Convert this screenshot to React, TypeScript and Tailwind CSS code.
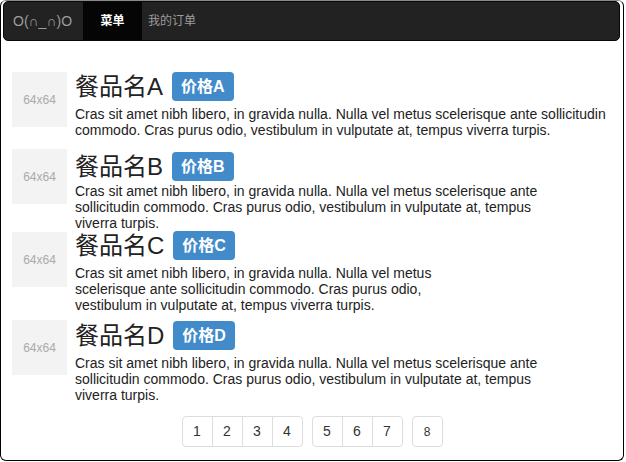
import React from "react";

const FONT = '"Liberation Sans", Arial, "Noto Sans CJK SC", sans-serif';
const LOREM =
  "Cras sit amet nibh libero, in gravida nulla. Nulla vel metus scelerisque ante sollicitudin commodo. Cras purus odio, vestibulum in vulputate at, tempus viverra turpis.";

type Item = { name: string; price: string; mt: string; imgOffset: string; width: string; pmt: string };

const items: Item[] = [
  { name: "餐品名A", price: "价格A", mt: "mt-[31px]", imgOffset: "mt-0", width: "w-[540px]", pmt: "mt-[5px]" },
  { name: "餐品名B", price: "价格B", mt: "mt-[14px]", imgOffset: "-mt-[3px]", width: "w-[470px]", pmt: "mt-[2px]" },
  { name: "餐品名C", price: "价格C", mt: "mt-0", imgOffset: "mt-[1px]", width: "w-[360px]", pmt: "mt-[5px]" },
  { name: "餐品名D", price: "价格D", mt: "mt-[8px]", imgOffset: "-mt-[1px]", width: "w-[470px]", pmt: "mt-[5px]" },
];

function MediaItem({ it }: { it: Item }) {
  return (
    <div className={`flex pl-[11px] gap-[8px] ${it.mt}`}>
      <div
        className={`w-[55px] h-[55px] shrink-0 bg-[#f3f3f3] flex items-center justify-center text-[12px] text-[#aaaaaa] ${it.imgOffset}`}
      >
        64x64
      </div>
      <div className={`${it.width} flex flex-col`}>
        <div className="h-[29px] flex items-center gap-[9px]">
          <span className="text-[24px] leading-none text-[#222]">{it.name}</span>
          <span className="h-[29px] px-[9px] rounded-[4px] bg-[#428bca] text-white font-bold text-[16px] flex items-center">
            {it.price}
          </span>
        </div>
        <p className={`${it.pmt} text-[14px] leading-[16px] text-[#222]`}>{LOREM}</p>
      </div>
    </div>
  );
}

function PageBtn({ label, first, small }: { label: string; first?: boolean; small?: boolean }) {
  return (
    <div
      className={`w-[31px] h-[31px] flex items-center justify-center border border-[#dddddd] bg-white text-[#333] ${
        small ? "text-[12px]" : "text-[14px]"
      } ${first ? "" : "-ml-px"}`}
    >
      {label}
    </div>
  );
}

export default function App() {
  return (
    <div className="w-[626px] h-[462px] bg-white" style={{ fontFamily: FONT }}>
      <div className="w-[624px] h-[461px] border border-black border-t-[#8a8a8a] rounded-[6px] overflow-hidden flex flex-col">
        <div className="ml-[2px] mr-[3px] h-[40px] bg-[#222222] border border-[#080808] rounded-[5px] flex items-stretch">
          <div className="w-[79px] pl-[9px] flex items-center text-[14px] text-[#9d9d9d]">O(∩_∩)O</div>
          <div className="w-[59px] bg-[#050505] flex items-center justify-center text-[12px] font-bold text-white">
            菜单
          </div>
          <div className="pl-[6px] flex items-center text-[12px] text-[#9d9d9d]">我的订单</div>
        </div>
        {items.map((it) => (
          <MediaItem key={it.name} it={it} />
        ))}
        <div className="mt-[13px] flex justify-center gap-[9px]">
          <div className="flex [&>*:first-child]:rounded-l-[4px] [&>*:last-child]:rounded-r-[4px]">
            <PageBtn label="1" first />
            <PageBtn label="2" />
            <PageBtn label="3" />
            <PageBtn label="4" />
          </div>
          <div className="flex [&>*:first-child]:rounded-l-[4px] [&>*:last-child]:rounded-r-[4px]">
            <PageBtn label="5" first />
            <PageBtn label="6" />
            <PageBtn label="7" />
          </div>
          <div className="flex [&>*]:rounded-[4px]">
            <PageBtn label="8" first small />
          </div>
        </div>
      </div>
    </div>
  );
}
